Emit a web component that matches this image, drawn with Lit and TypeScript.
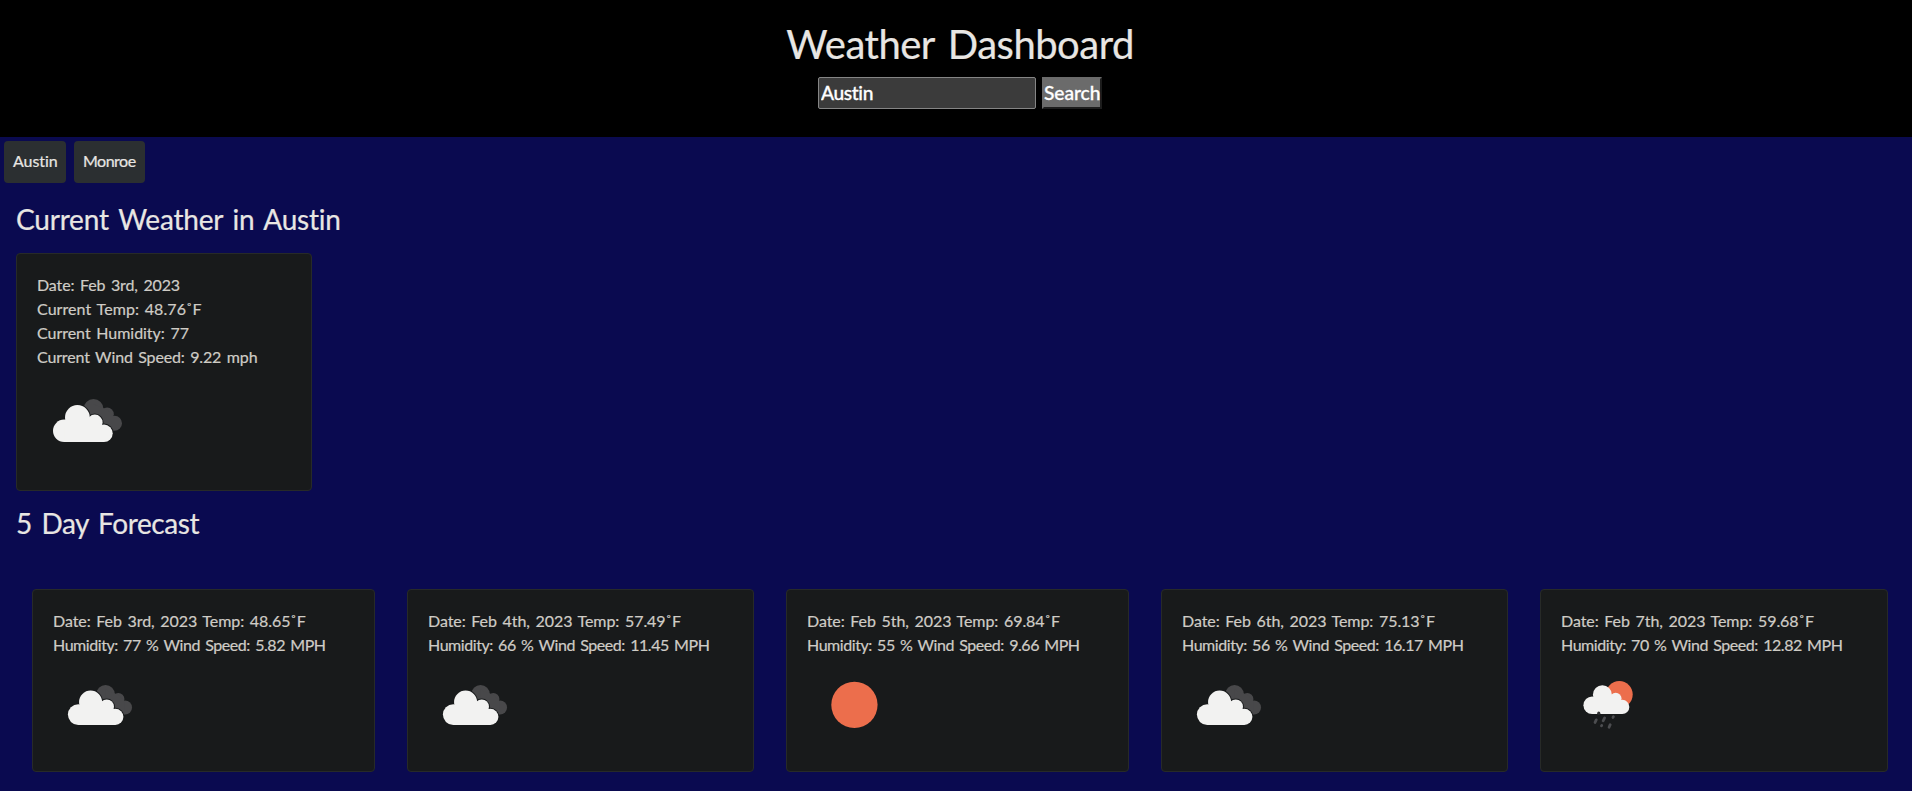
import { LitElement, html, css, svg } from "lit";
import { customElement, property } from "lit/decorators.js";

type Kind = "clouds" | "clear" | "rain";

@customElement("weather-icon")
class WeatherIcon extends LitElement {
  @property() kind: Kind = "clouds";
  static styles = css`
    :host { display: block; width: 100px; height: 100px; }
    svg { display: block; width: 100%; height: 100%; }
    .white { fill: #f2f2f1; }
    .dark { fill: #48484a; }
    .gap { fill: #181a1b; stroke: #181a1b; stroke-width: 2; }
    .sun { fill: #ec6e4c; }
    .drop { stroke: #4c4d50; stroke-width: 3; stroke-linecap: round; fill: none; }
    .notch { fill: #303133; }
  `;
  private lobes() {
    return svg`
    <circle cx="27.2" cy="60.8" r="11.2"/><circle cx="40.4" cy="47.4" r="12.4"/>
    <circle cx="57.8" cy="52.4" r="7.8"/><circle cx="67" cy="63.3" r="8.7"/>`;
  }
  private picture() {
    if (this.kind === "clear") return svg`<circle class="sun" cx="51" cy="50.4" r="24.9"/>`;
    if (this.kind === "rain")
      return svg`
        <circle class="sun" cx="62.7" cy="39.2" r="14.4"/>
        <g class="white">
          <circle cx="33.5" cy="50.8" r="9.4"/><circle cx="44.5" cy="39.6" r="10.2"/>
          <circle cx="58.8" cy="43.6" r="6.3"/><circle cx="65.9" cy="52.6" r="7.6"/>
          <path d="M33.5 60.2V43H60L65.9 47V60.2Z"/>
        </g>
        <circle class="notch" cx="40.6" cy="59.3" r="1.7"/>
        <path class="drop" d="M36.6 69.3L37.9 66.5M45.3 67.5L46.9 64.4M55.9 63.9L56.3 63.2M43.5 73L43.8 72.5M51.7 74.4L52.9 71.7"/>`;
    return svg`
      <g class="dark">
        <circle cx="56.5" cy="39" r="10"/><circle cx="70.2" cy="44.2" r="6.6"/>
        <circle cx="77.5" cy="53.2" r="7.5"/><path d="M56 34L71 40L77 47V60.7H56Z"/>
      </g>
      <g class="gap">${this.lobes()}</g>
      <g class="white">${this.lobes()}<path d="M27.2 72V52H60L67 56V72Z"/></g>`;
  }
  render() {
    return html`<svg viewBox="0 0 100 100">${this.picture()}</svg>`;
  }
}

const days: { date: string; temp: string; hum: number; wind: string; kind: Kind }[] = [
  { date: "Feb 3rd, 2023", temp: "48.65", hum: 77, wind: "5.82", kind: "clouds" },
  { date: "Feb 4th, 2023", temp: "57.49", hum: 66, wind: "11.45", kind: "clouds" },
  { date: "Feb 5th, 2023", temp: "69.84", hum: 55, wind: "9.66", kind: "clear" },
  { date: "Feb 6th, 2023", temp: "75.13", hum: 56, wind: "16.17", kind: "clouds" },
  { date: "Feb 7th, 2023", temp: "59.68", hum: 70, wind: "12.82", kind: "rain" },
];

@customElement("app-root")
class AppRoot extends LitElement {
  static styles = css`
    :host {
      display: block; height: 791px; background: #0a0a50; color: #e8e6e3;
      font-family: "Trebuchet MS", Lato, sans-serif; font-size: 16px; line-height: 24px;
      font-variant-ligatures: none; -webkit-text-stroke: 0.2px currentColor;
    }
    * { box-sizing: border-box; }
    header {
      height: 137px; background: #000; padding: 20px 0 0 8px;
      display: flex; flex-direction: column; align-items: center;
    }
    h1, h3 { margin: 0; font-weight: 400; word-spacing: 0.1em; }
    h1 { font-size: 40px; line-height: 48px; letter-spacing: -0.5px; }
    form { display: flex; gap: 6px; margin-top: 9px; }
    input, button {
      font-family: inherit; font-size: 19.2px; font-weight: 500; color: #fff; height: 32px;
      margin: 0; outline: 0; -webkit-text-stroke: 0.3px #fff;
    }
    input {
      width: 218px; padding: 0 1px 2px 2px; background: #3b3b3b; border: 1px solid #858585;
      border-radius: 2px; letter-spacing: -0.38px;
    }
    button {
      width: 60px; padding: 0 0 2px; background: #6b6b6b; border: 2px solid; border-radius: 0;
      border-color: #6b6b6b #1c1c1c #1c1c1c #6b6b6b; letter-spacing: -0.05px;
    }
    nav { display: flex; gap: 8px; padding: 4px 4px 0; }
    .chip { height: 42px; padding: 8px 9px; background: #2b2f31; border-radius: 4px; white-space: nowrap; }
    .chip.a { width: 62px; letter-spacing: -0.07px; }
    .chip.m { width: 71px; letter-spacing: -0.5px; }
    h3 { font-size: 28px; line-height: 34px; letter-spacing: -0.2px; }
    .now { padding: 19px 16px 0; }
    .card {
      background: #181a1b; border: 1px solid #272a28; border-radius: 4px; padding: 19px 20px 20px;
      color: #cfccc6; white-space: nowrap; word-spacing: 0.1em;
    }
    .card weather-icon { margin-top: 1px; }
    .current { width: 296px; height: 238px; margin-top: 17px; }
    .next { margin-top: 15px; letter-spacing: -0.4px; }
    .forecast { display: grid; grid-template-columns: 343px 347px 343px 347px 348px; column-gap: 32px; padding: 49px 0 0 32px; }
    .day { height: 183px; }
    .day weather-icon { width: 93px; height: 93px; }
    .l1 { letter-spacing: -0.12px; }
    .l2 { letter-spacing: 0.07px; }
    .l3 { letter-spacing: -0.03px; }
    .l4 { letter-spacing: -0.15px; }
    .top { letter-spacing: -0.06px; }
    .bottom { letter-spacing: -0.44px; }
  `;
  render() {
    return html`
      <header>
        <h1>Weather Dashboard</h1>
        <form @submit=${(e: Event) => e.preventDefault()}>
          <input type="text" .value=${"Austin"} /><button type="submit">Search</button>
        </form>
      </header>
      <nav><div class="chip a">Austin</div><div class="chip m">Monroe</div></nav>
      <section class="now">
        <h3>Current Weather in Austin</h3>
        <div class="card current">
          <div class="l1">Date: Feb 3rd, 2023</div>
          <div class="l2">Current Temp: 48.76˚F</div>
          <div class="l3">Current Humidity: 77</div>
          <div class="l4">Current Wind Speed: 9.22 mph</div>
          <weather-icon kind="clouds"></weather-icon>
        </div>
        <h3 class="next">5 Day Forecast</h3>
      </section>
      <section class="forecast">
        ${days.map(
          (d) => html`<div class="card day">
            <div class="top">Date: ${d.date} Temp: ${d.temp}˚F</div>
            <div class="bottom">Humidity: ${d.hum} % Wind Speed: ${d.wind} MPH</div>
            <weather-icon kind=${d.kind}></weather-icon>
          </div>`
        )}
      </section>
    `;
  }
}
